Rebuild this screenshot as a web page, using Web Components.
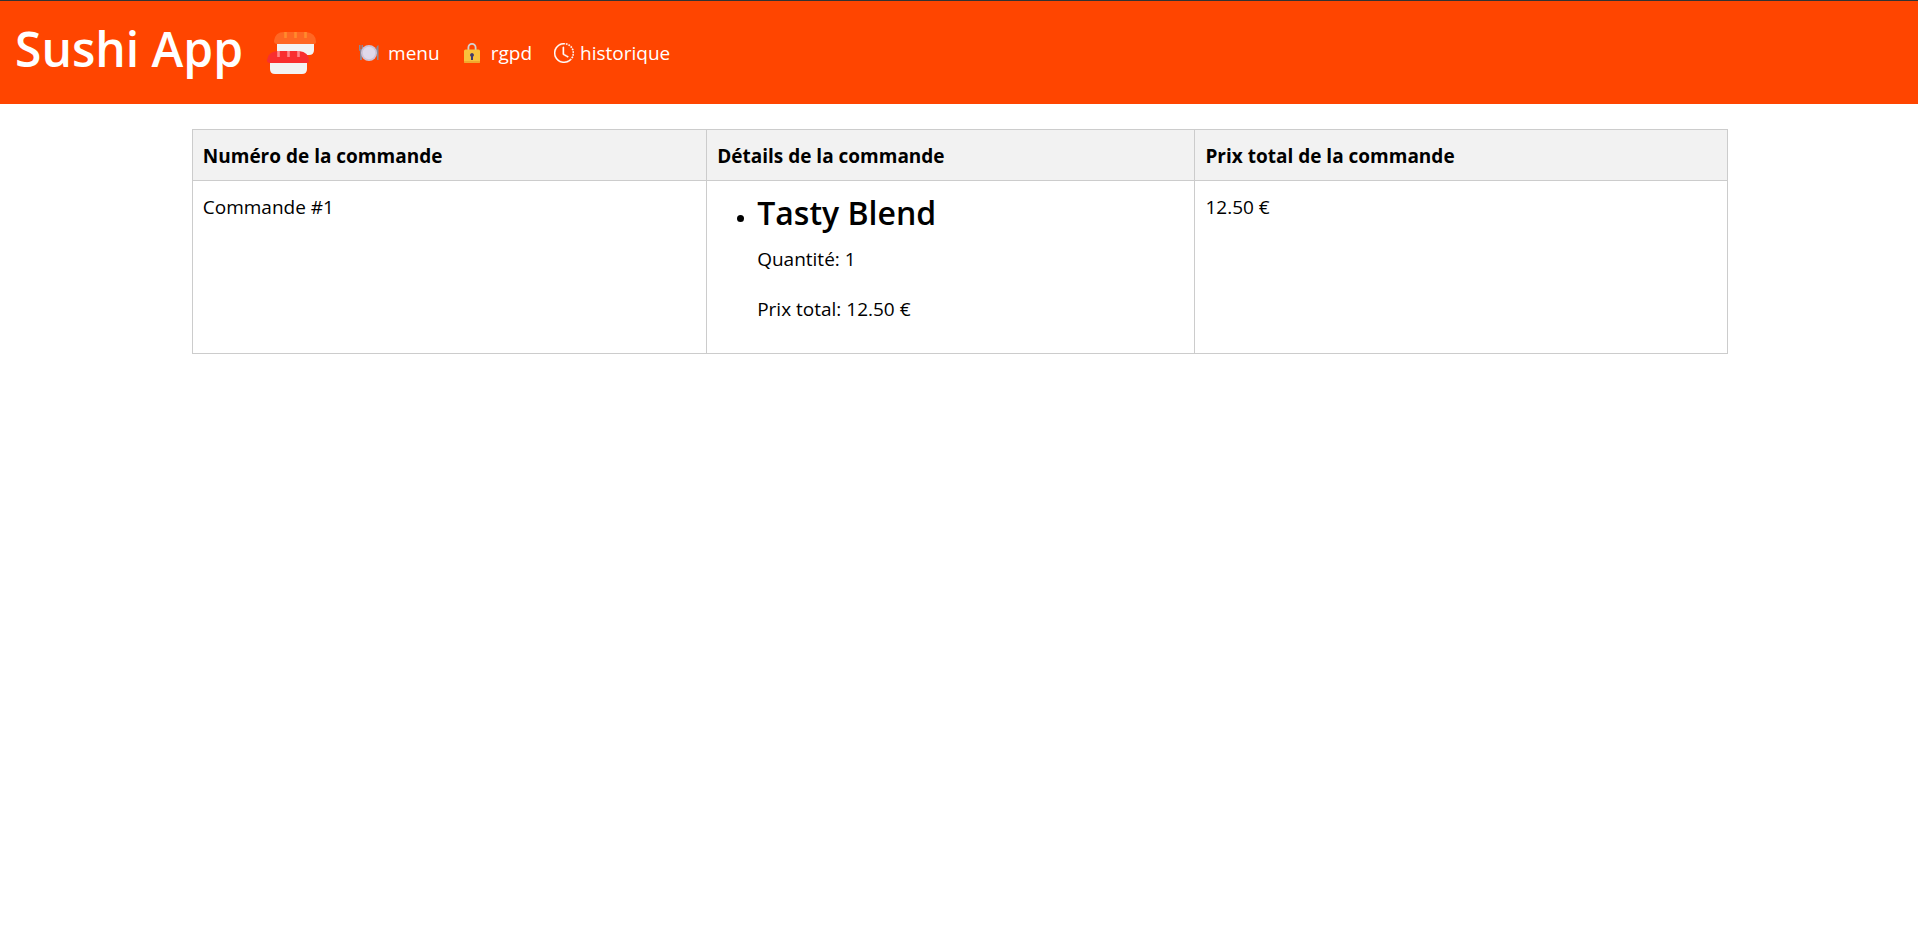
<!DOCTYPE html>
<html lang="fr">
<head>
<meta charset="utf-8">
<title>Sushi App</title>
<style>
  body {
    margin: 0;
    background: #fff;
    color: #000;
    font-family: "Segoe UI", "Open Sans", "Noto Sans", sans-serif;
    font-size: 19px;
    line-height: 30px;
  }
</style>
</head>
<body>
<sushi-header>
  <nav-link href="#menu">
    <svg slot="icon" width="20" height="20" viewBox="0 0 20 20" aria-hidden="true">
      <path d="M0 2v5q0 1 1 1v9h2V8q1 0 1-1V2H3v4H2.500V2H1.500v4H1V2z" fill="#8d8795"/>
      <path d="M19.500 2q-2.500 1-2.500 6v3h1v6h1.500z" fill="#8d8795"/>
      <circle cx="10" cy="10" r="8" fill="#cdc4d8"/>
      <circle cx="10" cy="10" r="6.200" fill="#e0d9ea"/>
    </svg>menu</nav-link>
  <nav-link href="#rgpd">
    <svg slot="icon" width="20" height="20" viewBox="0 0 20 20" aria-hidden="true">
      <path d="M6.400 8V4.500a3.600 3.600 0 0 1 7.200 0V8" fill="none" stroke="#d3d3d3" stroke-width="1.800"/>
      <rect x="2" y="6.500" width="16" height="13.500" rx="1.500" fill="#f9c23c"/>
      <path d="M2 18h16v.5a1.500 1.500 0 0 1-1.500 1.500h-13A1.500 1.500 0 0 1 2 18.500z" fill="#f0a92e"/>
      <path d="M10 10a2 2 0 0 0-1 3.700V17h2v-3.300A2 2 0 0 0 10 10z" fill="#433b6b"/>
    </svg>rgpd</nav-link>
  <nav-link class="tight" href="#historique">
    <svg slot="icon" width="20" height="20" viewBox="0 0 16 16" fill="#fff" stroke="#fff" stroke-width=".3" aria-hidden="true">
      <path d="M8.515 1.019A7 7 0 0 0 8 1V0a8 8 0 0 1 .589.022zm2.004.45a7 7 0 0 0-.985-.299l.219-.976q.576.129 1.126.342zm1.370.710a7 7 0 0 0-.439-.270l.493-.870a8 8 0 0 1 .979.654l-.615.789a7 7 0 0 0-.418-.302zm1.834 1.790a7 7 0 0 0-.653-.796l.724-.690q.406.429.747.910zm.744 1.352a7 7 0 0 0-.214-.468l.893-.450a8 8 0 0 1 .450 1.088l-.950.313a7 7 0 0 0-.179-.483m.530 2.507a7 7 0 0 0-.100-1.025l.985-.170q.100.580.116 1.170zm-.131 1.538q.050-.254.081-.510l.993.123a8 8 0 0 1-.230 1.155l-.964-.267q.069-.247.120-.501m-.952 2.379q.276-.436.486-.908l.914.405q-.240.540-.555 1.038zm-.964 1.205q.183-.183.350-.378l.758.653a8 8 0 0 1-.401.432z"/>
      <path d="M8 1a7 7 0 1 0 4.950 11.950l.707.707A8.001 8.001 0 1 1 8 0z"/>
      <path d="M7.500 3a.5.5 0 0 1 .5.5v5.210l3.248 1.856a.5.5 0 0 1-.496.868l-3.500-2A.5.5 0 0 1 7 9V3.500a.5.5 0 0 1 .5-.5"/>
    </svg>historique</nav-link>
</sushi-header>
<main>
  <order-history>
    <order-item name="Tasty Blend" quantity="1" price="12.50"></order-item>
  </order-history>
</main>

<template id="header-template">
  <style>
    :host { display: block; }
    header {
      display: flex;
      align-items: center;
      height: 103px;
      padding-left: 15px;
      border-top: 1px solid #333;
      background: #ff4500;
      color: #fff;
    }
    h1 {
      margin: 0 0 8px;
      font-size: 48px;
      line-height: 60px;
      font-weight: 600;
      white-space: nowrap;
    }
    .logo { flex: none; margin-left: 24px; }
    nav { display: flex; align-items: center; gap: 22px; margin-left: 42px; }
  </style>
  <header>
    <h1>Sushi App</h1>
    <svg class="logo" width="50" height="44" viewBox="0 0 50 44" role="img" aria-label="Sushi">
      <path d="M10 13h37v6q0 5-5 5H10z" fill="#f3f3f3"/>
      <path d="M17 1h22q10 1 10 10 0 2-3 2H10q-3 0-3-3 1-9 10-9z" fill="#ff6723"/>
      <path d="M18.500 1v6M28.500 1v6M38.500 1v6" stroke="#ff8b2c" stroke-width="2.600"/>
      <path d="M3 32h37v6q0 5-5 5H8q-5 0-5-5z" fill="#f3f3f3"/>
      <path d="M10 20h22q10 1 10 10 0 2-3 2H3q-3 0-3-3 1-8 10-9z" fill="#f92f2f"/>
      <path d="M11.500 20v6M21.500 20v6M31.500 20v6" stroke="#ff8687" stroke-width="2.600"/>
    </svg>
    <nav aria-label="Navigation principale"><slot></slot></nav>
  </header>
</template>

<template id="link-template">
  <style>
    :host { display: block; --gap: 9px; }
    :host(.tight) { --gap: 6px; }
    a { display: flex; align-items: center; gap: var(--gap); color: #fff; text-decoration: none; }
    ::slotted(svg) { display: block; flex: none; }
  </style>
  <a><slot name="icon"></slot><span><slot></slot></span></a>
</template>

<template id="history-template">
  <style>
    :host { display: block; margin: 25px 10% 0; }
    table { width: calc(100% + 2px); border-collapse: collapse; table-layout: fixed; }
    col.number { width: 33.5%; }
    col.details { width: 31.8%; }
    th, td { padding: 11px 10px 9px; border: 1px solid #ccc; text-align: left; vertical-align: top; }
    th { background: #f2f2f2; font-weight: 700; }
    ul { margin: 0; padding-left: 40px; }
  </style>
  <table>
    <colgroup><col class="number"><col class="details"><col></colgroup>
    <thead>
      <tr><th scope="col">Numéro de la commande</th><th scope="col">Détails de la commande</th><th scope="col">Prix total de la commande</th></tr>
    </thead>
    <tbody>
      <tr><td>Commande #1</td><td><ul><slot></slot></ul></td><td>12.50 €</td></tr>
    </tbody>
  </table>
</template>

<template id="item-template">
  <style>
    :host { display: list-item; list-style: disc; }
    h2 { margin: 0 0 10px; font-size: 32px; line-height: 42px; font-weight: 600; }
    p { margin: 0 0 20px; }
  </style>
  <h2></h2>
  <p class="quantity"></p>
  <p class="price"></p>
</template>

<script>
  class TemplateElement extends HTMLElement {
    constructor() {
      super();
      const template = document.getElementById(this.constructor.template);
      this.attachShadow({ mode: "open" }).append(template.content.cloneNode(true));
    }
  }
  class SushiHeader extends TemplateElement { static template = "header-template"; }
  class NavLink extends TemplateElement {
    static template = "link-template";
    connectedCallback() {
      this.shadowRoot.querySelector("a").setAttribute("href", this.getAttribute("href"));
    }
  }
  class OrderHistory extends TemplateElement { static template = "history-template"; }
  class OrderItem extends TemplateElement {
    static template = "item-template";
    connectedCallback() {
      const root = this.shadowRoot;
      root.querySelector("h2").textContent = this.getAttribute("name");
      root.querySelector(".quantity").textContent = `Quantité: ${this.getAttribute("quantity")}`;
      root.querySelector(".price").textContent = `Prix total: ${this.getAttribute("price")} €`;
    }
  }
  customElements.define("sushi-header", SushiHeader);
  customElements.define("nav-link", NavLink);
  customElements.define("order-history", OrderHistory);
  customElements.define("order-item", OrderItem);
</script>
</body>
</html>
